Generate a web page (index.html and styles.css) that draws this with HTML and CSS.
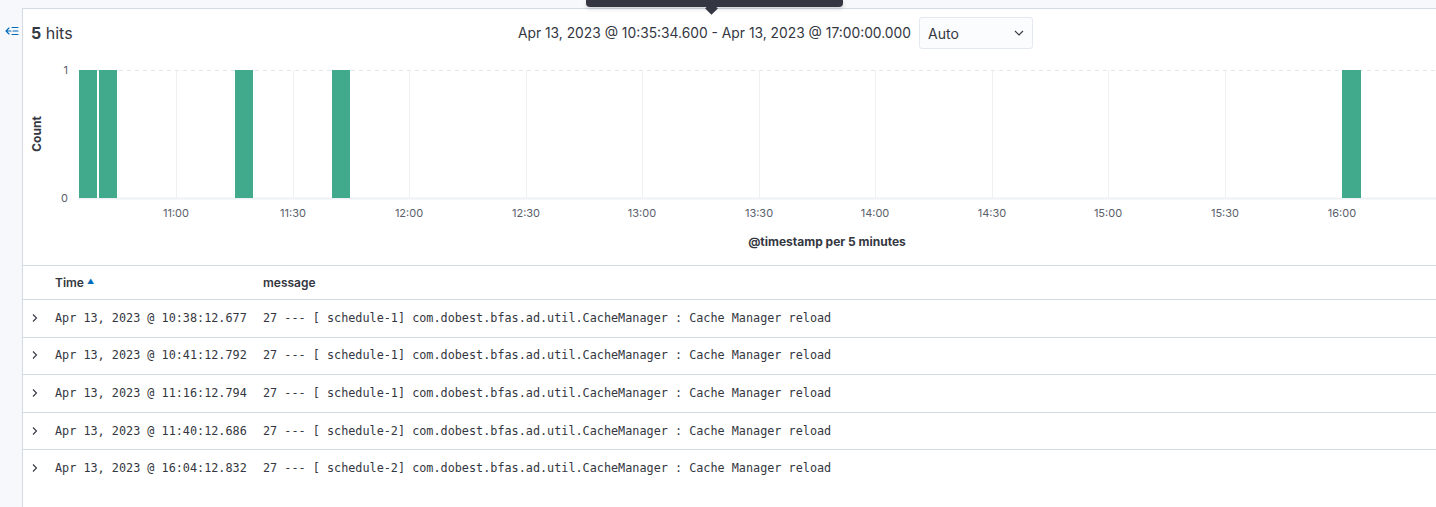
FILE: index.html
```html
<!DOCTYPE html>
<html>
<head>
<meta charset="utf-8">
<link rel="stylesheet" href="styles.css">
</head>
<body>
<div class="page">
  <aside class="side">
    <button class="collapse" aria-label="collapse">
      <svg width="14" height="12" viewBox="0 0 14 12"><path d="M4 3 L1 6 L4 9 M1 6 H6" fill="none" stroke="#006bb8" stroke-width="1.1" stroke-linecap="round" stroke-linejoin="round"/><path d="M7 2.5 H13 M8 6 H13 M7 9.5 H13" fill="none" stroke="#006bb8" stroke-width="1.1" stroke-linecap="round"/></svg>
    </button>
  </aside>
  <main class="panel">
    <div class="tooltip"></div>
    <header class="hits-bar">
      <div class="hits"><b>5</b> hits</div>
      <div class="range">
        <span class="range-text">Apr 13, 2023 @ 10:35:34.600 - Apr 13, 2023 @ 17:00:00.000</span>
        <div class="select">Auto
          <svg width="10" height="6" viewBox="0 0 10 6"><path d="M1 1 L5 5 L9 1" fill="none" stroke="#343741" stroke-width="1.1"/></svg>
        </div>
      </div>
    </header>
    <svg class="chart" width="1413" height="208" viewBox="0 0 1413 208">
      <g stroke="#eef0f3" stroke-width="1">
        <line x1="153.5" y1="13" x2="153.5" y2="141"/>
        <line x1="270.5" y1="13" x2="270.5" y2="141"/>
        <line x1="386.5" y1="13" x2="386.5" y2="141"/>
        <line x1="503.5" y1="13" x2="503.5" y2="141"/>
        <line x1="619.5" y1="13" x2="619.5" y2="141"/>
        <line x1="736.5" y1="13" x2="736.5" y2="141"/>
        <line x1="852.5" y1="13" x2="852.5" y2="141"/>
        <line x1="969.5" y1="13" x2="969.5" y2="141"/>
        <line x1="1085.5" y1="13" x2="1085.5" y2="141"/>
        <line x1="1202.5" y1="13" x2="1202.5" y2="141"/>
      </g>
      <line x1="56" y1="13.5" x2="1413" y2="13.5" stroke="#e4e7ec" stroke-dasharray="4 4"/>
      <line x1="56" y1="141.5" x2="1413" y2="141.5" stroke="#eef0f3" stroke-width="2"/>
      <g fill="#41aa8c">
        <rect x="56" y="13" width="18" height="128"/>
        <rect x="76" y="13" width="18" height="128"/>
        <rect x="212" y="13" width="18" height="128"/>
        <rect x="309" y="13" width="18" height="128"/>
        <rect x="1319" y="13" width="19" height="128"/>
      </g>
      <g class="ylab">
        <text x="45" y="17" text-anchor="end">1</text>
        <text x="45" y="145" text-anchor="end">0</text>
      </g>
      <text class="axis-title" transform="translate(18 77) rotate(-90)" text-anchor="middle">Count</text>
      <g class="xlab" text-anchor="middle">
        <text x="153" y="160">11:00</text>
        <text x="270" y="160">11:30</text>
        <text x="386" y="160">12:00</text>
        <text x="503" y="160">12:30</text>
        <text x="619" y="160">13:00</text>
        <text x="736" y="160">13:30</text>
        <text x="852" y="160">14:00</text>
        <text x="969" y="160">14:30</text>
        <text x="1085" y="160">15:00</text>
        <text x="1202" y="160">15:30</text>
        <text x="1319" y="160">16:00</text>
      </g>
      <text class="axis-title" x="804" y="189" text-anchor="middle">@timestamp per 5 minutes</text>
    </svg>
    <table class="docs">
      <thead>
        <tr><th class="c-toggle"></th><th class="c-time">Time <span class="sort">&#9650;</span></th><th>message</th></tr>
      </thead>
      <tbody>
        <tr><td class="c-toggle"><svg width="8" height="10" viewBox="0 0 8 10"><path d="M2 1.5 L5.5 5 L2 8.5" fill="none" stroke="#343741" stroke-width="1.1"/></svg></td><td class="c-time">Apr 13, 2023 @ 10:38:12.677</td><td>27 --- [ schedule-1] com.dobest.bfas.ad.util.CacheManager : Cache Manager reload</td></tr>
        <tr><td class="c-toggle"><svg width="8" height="10" viewBox="0 0 8 10"><path d="M2 1.5 L5.5 5 L2 8.5" fill="none" stroke="#343741" stroke-width="1.1"/></svg></td><td class="c-time">Apr 13, 2023 @ 10:41:12.792</td><td>27 --- [ schedule-1] com.dobest.bfas.ad.util.CacheManager : Cache Manager reload</td></tr>
        <tr><td class="c-toggle"><svg width="8" height="10" viewBox="0 0 8 10"><path d="M2 1.5 L5.5 5 L2 8.5" fill="none" stroke="#343741" stroke-width="1.1"/></svg></td><td class="c-time">Apr 13, 2023 @ 11:16:12.794</td><td>27 --- [ schedule-1] com.dobest.bfas.ad.util.CacheManager : Cache Manager reload</td></tr>
        <tr><td class="c-toggle"><svg width="8" height="10" viewBox="0 0 8 10"><path d="M2 1.5 L5.5 5 L2 8.5" fill="none" stroke="#343741" stroke-width="1.1"/></svg></td><td class="c-time">Apr 13, 2023 @ 11:40:12.686</td><td>27 --- [ schedule-2] com.dobest.bfas.ad.util.CacheManager : Cache Manager reload</td></tr>
        <tr class="last"><td class="c-toggle"><svg width="8" height="10" viewBox="0 0 8 10"><path d="M2 1.5 L5.5 5 L2 8.5" fill="none" stroke="#343741" stroke-width="1.1"/></svg></td><td class="c-time">Apr 13, 2023 @ 16:04:12.832</td><td>27 --- [ schedule-2] com.dobest.bfas.ad.util.CacheManager : Cache Manager reload</td></tr>
      </tbody>
    </table>
  </main>
</div>
</body>
</html>
```

FILE: styles.css
```css
* { box-sizing: border-box; }
html, body { margin: 0; height: 100%; }
body {
  background: #f7f8fc;
  font-family: Inter, "Liberation Sans", sans-serif;
  color: #343741;
  overflow: hidden;
}
.page {
  display: flex;
  height: 507px;
}
.side {
  width: 22px;
  flex: none;
  padding-top: 25px;
}
.collapse {
  display: block;
  border: 0;
  background: none;
  padding: 0 0 0 5px;
  margin: 0;
  line-height: 0;
}
.panel {
  position: relative;
  flex: 1;
  margin-top: 8px;
  background: #fff;
  border-top: 1px solid #d3dae6;
  border-left: 1px solid #d3dae6;
}
.tooltip {
  position: absolute;
  top: -9px;
  left: 563px;
  width: 257px;
  height: 7px;
  background: #343741;
  border-radius: 0 0 4px 4px;
  box-shadow: 0 2px 4px rgba(0,0,0,0.15);
}
.tooltip::after {
  content: "";
  position: absolute;
  left: 121px;
  top: 4px;
  width: 9px;
  height: 9px;
  background: #343741;
  transform: rotate(45deg);
}
.hits-bar {
  display: flex;
  align-items: center;
  height: 48px;
  padding: 0 0 0 8px;
}
.hits {
  font-size: 16px;
  line-height: 20px;
}
.hits b { font-weight: 700; }
.range {
  display: flex;
  align-items: center;
  margin-left: auto;
  margin-right: 403px;
  gap: 8px;
}
.range-text {
  font-size: 13.82px;
}
.select {
  display: flex;
  align-items: center;
  justify-content: space-between;
  width: 114px;
  height: 32px;
  padding: 0 8px 0 8px;
  border: 1px solid #e3e8f2;
  border-radius: 3px;
  font-size: 14px;
  background: #fbfcfd;
}
.chart {
  display: block;
  font-family: Inter, "Liberation Sans", sans-serif;
}
.ylab text, .xlab text {
  font-size: 11px;
  fill: #5a606b;
}
.axis-title {
  font-size: 12px;
  font-weight: 700;
  fill: #343741;
}
.docs {
  width: 100%;
  border-collapse: collapse;
  border-top: 1px solid #d3dae6;
}
.docs th {
  text-align: left;
  font-size: 12px;
  font-weight: 600;
  height: 34px;
  padding: 0;
  border-bottom: 1px solid #d3dae6;
}
.docs td {
  font-family: "DejaVu Sans Mono", "Liberation Mono", monospace;
  font-size: 11.8px;
  height: 37.6px;
  padding: 0 0 1px 0;
  border-bottom: 1px solid #d3dae6;
  white-space: pre;
}
.docs tr.last td { border-bottom: 0; }
.docs td.c-toggle {
  width: 32px;
  padding: 0 0 1px 8px;
  line-height: 0;
}
.c-time { width: 208px; }
.sort {
  font-size: 7px;
  color: #006bb8;
  vertical-align: 3px;
}
```
